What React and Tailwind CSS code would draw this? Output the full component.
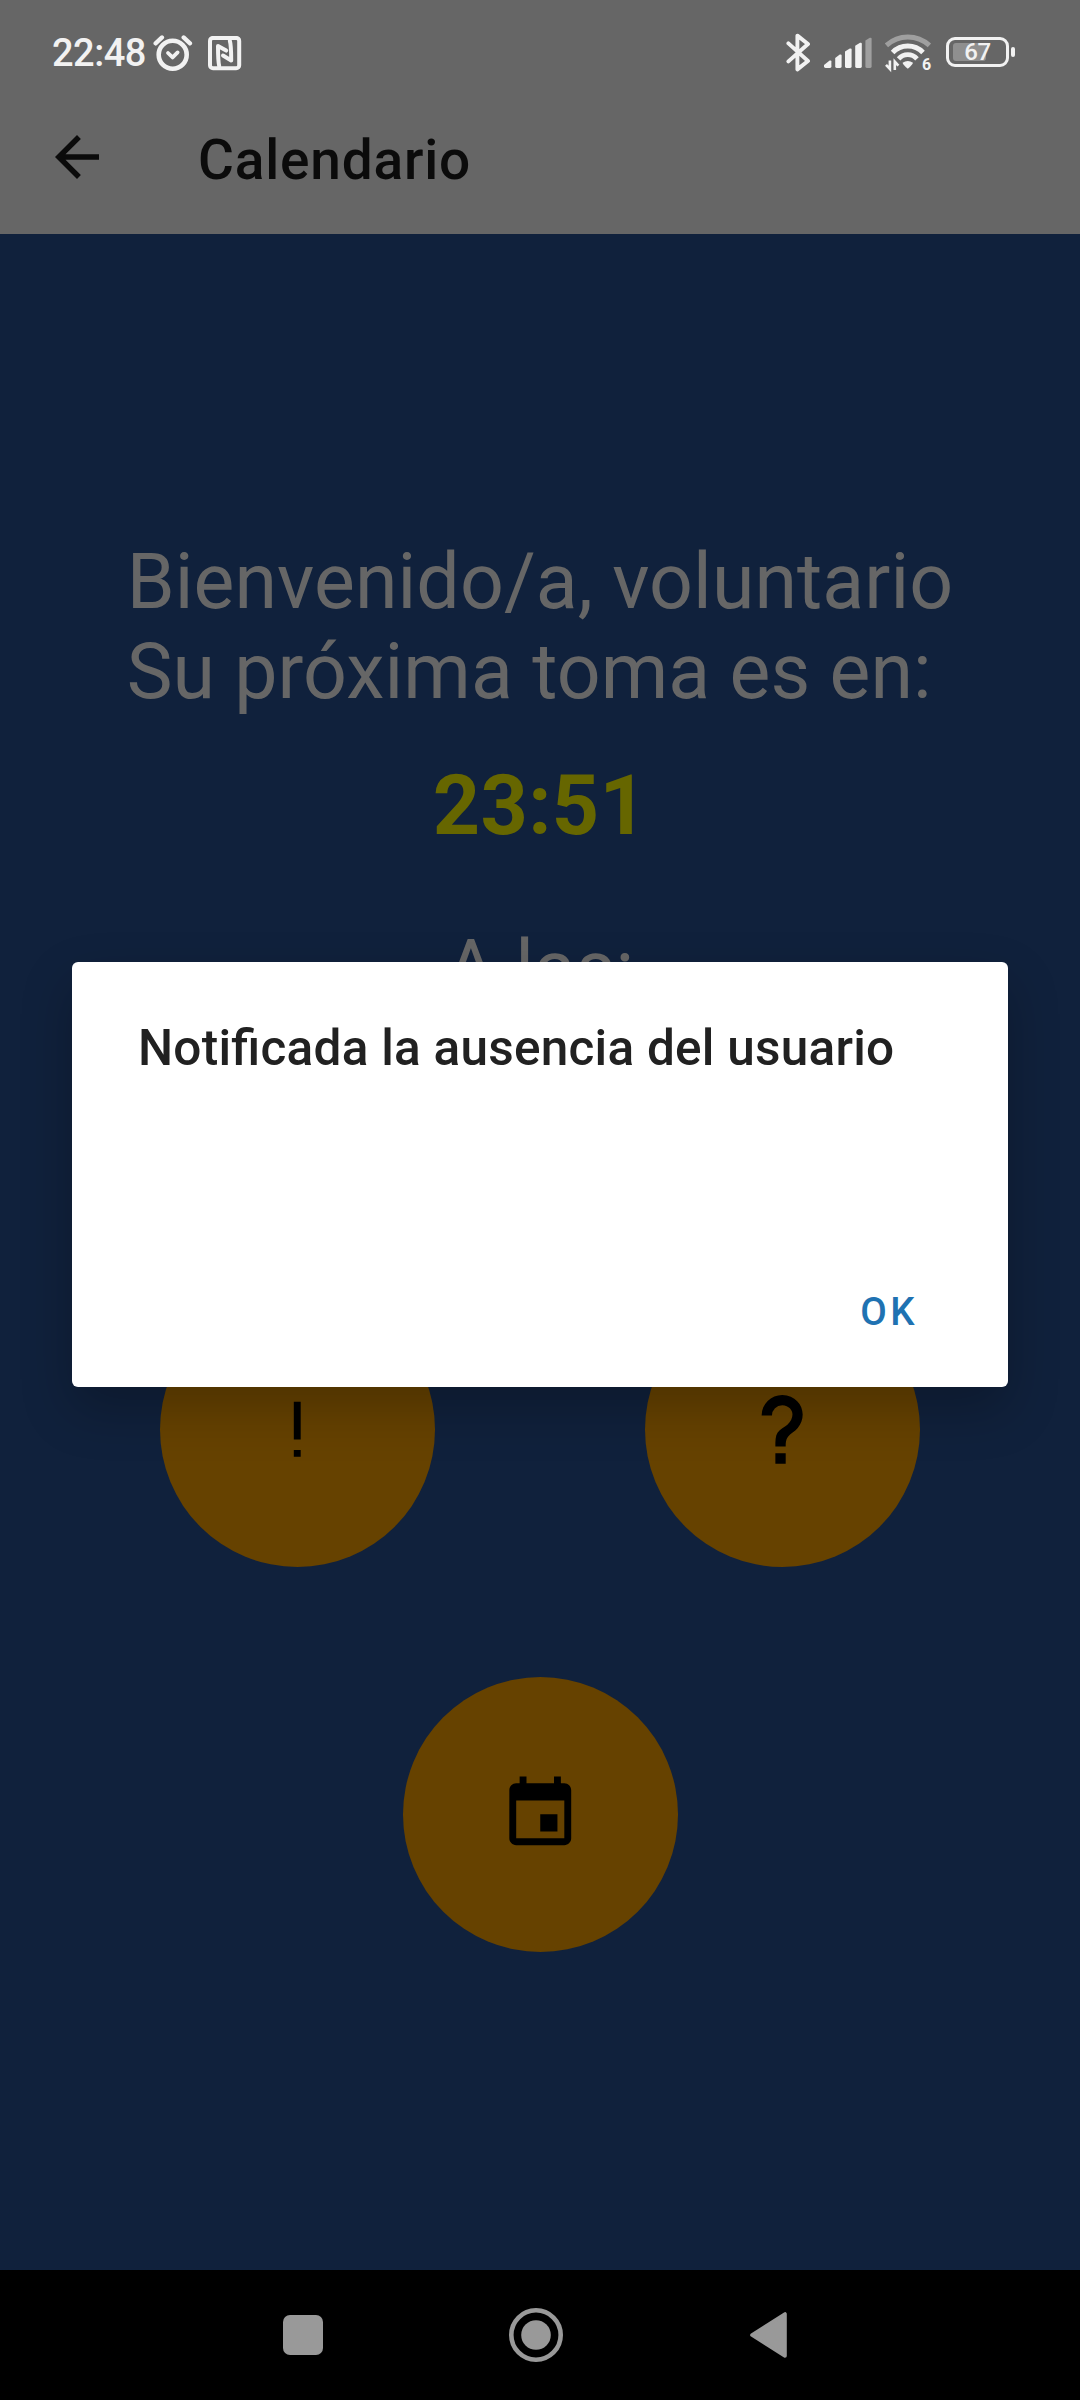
import React from "react";

function AlarmIcon() {
  return (
    <svg width="40" height="38" viewBox="0 0 40 38" fill="none" stroke="#f2f2f2" strokeLinecap="round" strokeLinejoin="round">
      <circle cx="19.7" cy="20.7" r="14" strokeWidth="4.6" />
      <path d="M2.6 9.4 L9 3.4 M37 9.4 L30.6 3.4" strokeWidth="4.2" />
      <path d="M15 19 L19.6 23.4 L24.6 18.4" strokeWidth="3.8" />
    </svg>
  );
}

function NfcIcon() {
  return (
    <svg width="34" height="35" viewBox="0 0 34 35" fill="none" stroke="#f2f2f2" strokeLinecap="round" strokeLinejoin="round">
      <rect x="2" y="1.9" width="29.2" height="30.4" rx="3" strokeWidth="4" />
      <path d="M11.2 30 C10 25 10 15 10 10 L18.2 14.6" strokeWidth="4" />
      <path d="M21.8 4.6 C23.2 9 23.2 19 23.2 24.4 L15 19.6" strokeWidth="4" />
    </svg>
  );
}

function BluetoothIcon() {
  return (
    <svg width="26" height="39" viewBox="0 0 26 39" fill="none" stroke="#f2f2f2" strokeWidth="3.9" strokeLinecap="round" strokeLinejoin="round">
      <path d="M2.4 10.4 L22 28 L11.4 36.4 V2.6 L22 11 L2.4 28.4" />
    </svg>
  );
}

function SignalIcon() {
  return (
    <svg width="49" height="32" viewBox="0 0 49 32" fill="#f2f2f2">
      <path d="M0 28 L5.6 23.6 Q7.4 23 7.4 24.6 V29.6 Q7.4 31 6 31 H1.6 Q0 31 0 29.6Z" />
      <path d="M11.2 21 L15.8 17.6 Q17.6 17 17.6 18.6 V29.6 Q17.6 31 16.2 31 H12.6 Q11.2 31 11.2 29.6Z" />
      <path d="M21 14.6 L25.8 11.6 Q27.6 11 27.6 12.6 V29.6 Q27.6 31 26.2 31 H22.4 Q21 31 21 29.6Z" />
      <path d="M31.2 8.8 L36 5.8 Q37.8 5.2 37.8 6.8 V29.6 Q37.8 31 36.4 31 H32.6 Q31.2 31 31.2 29.6Z" />
      <path fill="#9f9f9f" d="M41.4 3.6 L45.8 .8 Q47.6 .2 47.6 1.8 V29.6 Q47.6 31 46.2 31 H42.8 Q41.4 31 41.4 29.6Z" />
    </svg>
  );
}

function WifiIcon() {
  return (
    <svg width="50" height="43" viewBox="0 0 50 43" fill="none" strokeLinecap="butt">
      <path d="M1.4 11.4 Q10.6 3 22.8 3 T44.4 11.4" stroke="#9f9f9f" strokeWidth="5" />
      <path d="M7.6 18.4 Q13.8 12 22.8 12 T38 18.4" stroke="#f2f2f2" strokeWidth="5" />
      <path d="M13.6 24.8 Q17.4 20.6 22.8 20.6 T32 24.8" stroke="#f2f2f2" strokeWidth="4.8" />
      <path d="M17.6 28.8 Q22.8 25 28 28.8 Q27.4 31 22.8 34.8 Q18 31 17.6 28.8Z" fill="#f2f2f2" />
      <path d="M4.9 26.4 V35 L1 30.8 M9.8 36 V27.6 L13.4 31.6" stroke="#f2f2f2" strokeWidth="2.6" />
      <text x="37" y="35.8" fill="#f2f2f2" fontFamily="Roboto, sans-serif" fontSize="16" fontWeight="700">6</text>
    </svg>
  );
}

function Battery() {
  return (
    <div className="flex items-center gap-[2px]">
      <div className="relative flex h-[30px] w-[63px] items-center justify-center rounded-[9px] border-[3px] border-[#f2f2f2]">
        <div className="absolute left-[4px] top-[3px] h-[18px] w-[33px] rounded-[3px] bg-[#8f8f8f]" />
        <span className="relative text-[24px] font-medium leading-none tracking-[-0.5px]">67</span>
      </div>
      <div className="h-[10px] w-[4px] rounded-[2px] bg-[#f2f2f2]" />
    </div>
  );
}

function StatusBar() {
  return (
    <div className="flex h-[104px] items-center text-[#f2f2f2]">
      <span className="ml-[52px] mt-[2px] w-[101px] text-[38px] font-medium leading-none tracking-[-0.5px]">22:48</span>
      <div className="mt-[2px] flex items-center">
        <AlarmIcon />
        <span className="ml-[15px]"><NfcIcon /></span>
      </div>
      <div className="ml-auto mr-[65px] flex items-center">
        <BluetoothIcon />
        <span className="ml-[12px] mt-[2px]"><SignalIcon /></span>
        <span className="ml-[12px] mt-[6px]"><WifiIcon /></span>
        <span className="ml-[11px]"><Battery /></span>
      </div>
    </div>
  );
}

function RoundButton({ d, label }) {
  return (
    <button aria-label={label} className="flex size-[275px] items-center justify-center rounded-full bg-[#664200]">
      <svg width="82.5" height="82.5" viewBox="0 0 24 24" fill="#000"><path d={d} /></svg>
    </button>
  );
}

const exclamation = "M11 4h2v11h-2V4m2 14v2h-2v-2h2z";
const question =
  "M10 19h3v3h-3v-3M12 2c5.35.22 7.68 5.62 4.5 9.67-.83 1-2.17 1.66-2.83 2.5C13 15 13 16 13 17h-3c0-1.67 0-3.08.67-4.08.66-1 2-1.59 2.83-2.25C15.92 8.43 15.32 5.26 12 5a3 3 0 0 0-3 3H6a6 6 0 0 1 6-6z";
const calendar =
  "M17 12h-5v5h5v-5zM16 1v2H8V1H6v2H5c-1.11 0-1.99.9-1.99 2L3 19c0 1.1.89 2 2 2h14c1.1 0 2-.9 2-2V5c0-1.1-.9-2-2-2h-1V1h-2zm3 18H5V8h14v11z";

function Dialog() {
  return (
    <div className="absolute left-[72px] top-[962px] flex h-[425px] w-[936px] flex-col justify-between rounded-[6px] bg-white shadow-[0_22px_52px_rgba(0,0,0,0.24)]">
      <h2 className="ml-[66px] mt-[57px] whitespace-nowrap text-[49.5px] font-medium leading-[58px] tracking-[0.25px] text-[#212121] [font-feature-settings:'liga'_1]">
        Notificada la ausencia del usuario
      </h2>
      <button className="mb-[51px] mr-[90px] self-end text-[38.5px] font-medium leading-[48px] tracking-[3.4px] text-[#1f72b2]">
        OK
      </button>
    </div>
  );
}

export default function App() {
  return (
    <div className="relative flex h-[2400px] w-[1080px] flex-col overflow-hidden bg-[#10213c] font-['Roboto',sans-serif]">
      <header className="h-[234px] bg-[#666666]">
        <StatusBar />
        <div className="flex h-[110px] items-center">
          <svg className="-mt-[4px] ml-[44px]" width="66" height="66" viewBox="0 0 24 24" fill="#0b0b0b">
            <path d="M20 11H7.83l5.59-5.59L12 4l-8 8 8 8 1.41-1.41L7.83 13H20v-2z" />
          </svg>
          <h1 className="ml-[88px] mt-[2px] text-[55px] font-medium leading-[64px] tracking-[0.8px] text-[#0b0b0b]">Calendario</h1>
        </div>
      </header>

      <main className="flex flex-1 flex-col items-center pt-[303px] text-[77px] leading-[90px] text-[#666666]">
        <p className="tracking-[0.1px]">
          Bienvenido/a, voluntario
          <br />
          Su próxima toma es en:
        </p>
        <p className="mt-[40px] text-[82.5px] font-bold leading-[97px] tracking-[0.4px] text-[#666600]">23:51</p>
        <p className="mt-[70px]">A las:</p>
        <div className="mt-[278px] flex gap-[210px]">
          <RoundButton d={exclamation} label="Aviso" />
          <RoundButton d={question} label="Ayuda" />
        </div>
        <div className="mt-[110px]">
          <RoundButton d={calendar} label="Calendario" />
        </div>
      </main>

      <nav className="flex h-[130px] items-center bg-black">
        <div className="ml-[283px] size-[40px] rounded-[7px] bg-[#999999]" />
        <svg className="ml-[186px]" width="54" height="54" viewBox="0 0 54 54">
          <circle cx="27" cy="27" r="24.7" fill="none" stroke="#999999" strokeWidth="4.6" />
          <circle cx="27" cy="27" r="14.8" fill="#999999" />
        </svg>
        <svg className="ml-[187px]" width="37" height="46" viewBox="0 0 37 46">
          <path d="M2 23 L35 2 V44 Z" fill="#999999" stroke="#999999" strokeWidth="3.6" strokeLinejoin="round" />
        </svg>
      </nav>

      <Dialog />
    </div>
  );
}
